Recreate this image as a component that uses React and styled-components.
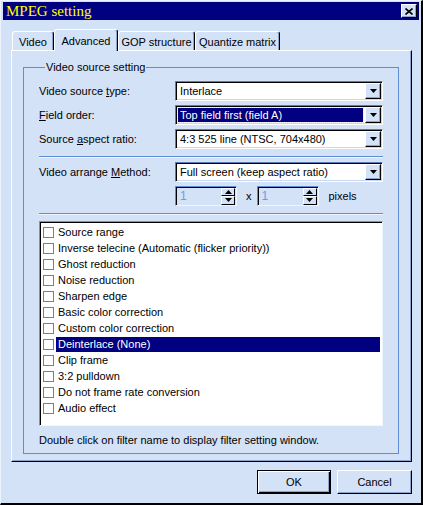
import React from 'react';
import styled, { createGlobalStyle } from 'styled-components';

const GlobalStyle = createGlobalStyle`
  html, body { margin: 0; padding: 0; background: #D4E2F7; }
  body {
    font-family: "Liberation Sans", Arial, sans-serif;
    font-size: 11px;
    color: #000;
  }
  * { box-sizing: border-box; }
`;

const Window = styled.div`
  width: 423px;
  height: 505px;
  background: #D4E2F7;
  border-top: 1px solid #EEF4FD;
  border-left: 1px solid #EEF4FD;
  border-right: 2px solid #000;
  border-bottom: 2px solid #000;
  padding: 1px 2px 0 2px;
  display: flex;
  flex-direction: column;
`;

const TitleBar = styled.div`
  height: 18px;
  background: #000080;
  display: flex;
  align-items: center;
  justify-content: space-between;
  padding: 0 2px 0 3px;
`;

const TitleText = styled.span`
  font-family: "Liberation Serif", "Times New Roman", serif;
  font-size: 15px;
  color: #FFFF00;
  line-height: 18px;
`;

const CloseButton = styled.div`
  width: 16px;
  height: 14px;
  background: #D4E2F7;
  border: 1px solid;
  border-color: #fff #000 #000 #fff;
  box-shadow: inset -1px -1px #8CA5CC;
  display: flex;
  align-items: center;
  justify-content: center;
`;

const TabRow = styled.div`
  display: flex;
  align-items: flex-end;
  height: 21px;
  margin-top: 9px;
  padding-left: 9px;
  position: relative;
  z-index: 1;
`;

const Tab = styled.div`
  width: ${p => p.$w}px;
  height: ${p => (p.$active ? 22 : 19)}px;
  margin-bottom: ${p => (p.$active ? -1 : 0)}px;
  background: #D4E2F7;
  border: 1px solid;
  border-bottom: none;
  border-color: #fff #000 transparent #fff;
  border-radius: 3px 3px 0 0;
  box-shadow: inset -1px 0 #8CA5CC;
  display: flex;
  align-items: center;
  justify-content: center;
  padding-top: ${p => (p.$active ? 0 : 2)}px;
  font-size: 11px;
  white-space: nowrap;
`;

const Panel = styled.div`
  height: 412px;
  margin: 0 7px 0 8px;
  border: 1px solid;
  border-color: #fff #000 #000 #fff;
  box-shadow: inset -1px -1px #8CA5CC;
  padding: 9px 0 0 11px;
`;

const Group = styled.fieldset`
  width: 376px;
  height: 394px;
  margin: 0;
  padding: 7px 15px 0 15px;
  border: 1px solid #5E8ED8;
  min-width: 0;
`;

const Legend = styled.legend`
  margin-left: 6px;
  padding: 0 1px;
  line-height: 14px;
  font-size: 11px;
`;

const Row = styled.div`
  display: grid;
  grid-template-columns: 136px 1fr;
  align-items: center;
  height: 20px;
  margin-top: ${p => p.$gap || 0}px;
`;

const Label = styled.span`
  white-space: nowrap;
`;

const Combo = styled.div`
  height: 20px;
  background: #fff;
  border: 1px solid;
  border-color: #5A7EB5 #fff #fff #5A7EB5;
  box-shadow: inset 1px 1px #000, inset -1px -1px #C8D8F0;
  padding: 1px;
  display: flex;
`;

const ComboText = styled.div`
  flex: 1;
  margin: 1px 2px 1px 1px;
  padding-left: 2px;
  display: flex;
  align-items: center;
  white-space: nowrap;
  background: ${p => (p.$selected ? '#000080' : 'transparent')};
  color: ${p => (p.$selected ? '#fff' : '#000')};
  outline: ${p => (p.$selected ? '1px dotted #FFFF00' : 'none')};
`;

const DropButton = styled.div`
  width: 16px;
  height: 16px;
  background: #D4E2F7;
  border: 1px solid;
  border-color: #fff #000 #000 #fff;
  box-shadow: inset -1px -1px #8CA5CC;
  display: flex;
  align-items: center;
  justify-content: center;
`;

const Separator = styled.div`
  height: 2px;
  border-top: 1px solid #5E8ED8;
  border-bottom: 1px solid #F0F6FF;
  margin-top: 7px;
`;

const SpinRow = styled.div`
  display: flex;
  align-items: center;
  height: 20px;
  margin-top: 4px;
  padding-left: 136px;
`;

const SpinBox = styled.div`
  width: 62px;
  height: 20px;
  background: #D4E2F7;
  border: 1px solid;
  border-color: #5E8ED8 #F0F6FF #F0F6FF #5E8ED8;
  box-shadow: inset 1px 1px #000;
  padding: 1px 1px 1px 4px;
  display: flex;
  align-items: center;
  color: #6E9AE0;
  font-size: 12px;
`;

const SpinValue = styled.span`
  flex: 1;
`;

const SpinButtons = styled.div`
  width: 14px;
  height: 17px;
  display: flex;
  flex-direction: column;
`;

const SpinHalf = styled.div`
  flex: 1;
  background: #D4E2F7;
  border: 1px solid;
  border-color: #fff #000 #000 #fff;
  display: flex;
  align-items: center;
  justify-content: center;
`;

const Times = styled.span`
  margin: 0 5px 0 9px;
`;

const Pixels = styled.span`
  margin-left: 10px;
`;

const ListBox = styled.div`
  height: 205px;
  margin-top: 6px;
  background: #fff;
  border: 1px solid;
  border-color: #6A96D8 #F0F6FF #F0F6FF #6A96D8;
  box-shadow: inset 1px 1px #000;
  padding: 2px 2px 0 3px;
`;

const Item = styled.div`
  display: flex;
  align-items: center;
  height: 16px;
`;

const CheckBox = styled.span`
  width: 11px;
  height: 11px;
  border: 1px solid #4F86D8;
  background: #fff;
  flex: none;
`;

const ItemLabel = styled.span`
  flex: 1;
  margin-left: 2px;
  padding-left: 2px;
  height: 15px;
  line-height: 15px;
  white-space: nowrap;
  background: ${p => (p.$selected ? '#000080' : 'transparent')};
  color: ${p => (p.$selected ? '#fff' : '#000')};
`;

const Hint = styled.div`
  margin-top: 7px;
  line-height: 14px;
`;

const Footer = styled.div`
  display: flex;
  justify-content: flex-end;
  gap: 6px;
  margin-top: 8px;
  padding-right: 7px;
`;

const Button = styled.div`
  width: ${p => p.$w}px;
  height: 24px;
  background: #D4E2F7;
  border: 1px solid;
  border-color: ${p => (p.$default ? '#000' : '#fff #000 #000 #fff')};
  box-shadow: ${p =>
    p.$default
      ? 'inset 1px 1px #fff, inset -1px -1px #000, inset -2px -2px #8CA5CC'
      : 'inset -1px -1px #8CA5CC'};
  display: flex;
  align-items: center;
  justify-content: center;
`;

function Arrow() {
  return (
    <svg width="7" height="4" viewBox="0 0 7 4">
      <path d="M0 0H7L3.5 4Z" fill="#000" />
    </svg>
  );
}

function SmallArrow({ up }) {
  return (
    <svg width="7" height="4" viewBox="0 0 7 4">
      <path d={up ? 'M3.5 0L7 4H0Z' : 'M0 0H7L3.5 4Z'} fill="#000" />
    </svg>
  );
}

function Spin() {
  return (
    <SpinBox>
      <SpinValue>1</SpinValue>
      <SpinButtons>
        <SpinHalf><SmallArrow up /></SpinHalf>
        <SpinHalf><SmallArrow /></SpinHalf>
      </SpinButtons>
    </SpinBox>
  );
}

function Select({ value, selected }) {
  return (
    <Combo>
      <ComboText $selected={selected}>{value}</ComboText>
      <DropButton><Arrow /></DropButton>
    </Combo>
  );
}

const filters = [
  'Source range',
  'Inverse telecine (Automatic (flicker priority))',
  'Ghost reduction',
  'Noise reduction',
  'Sharpen edge',
  'Basic color correction',
  'Custom color correction',
  'Deinterlace (None)',
  'Clip frame',
  '3:2 pulldown',
  'Do not frame rate conversion',
  'Audio effect',
];

const tabs = [
  { name: 'Video', w: 42 },
  { name: 'Advanced', w: 64, active: true },
  { name: 'GOP structure', w: 77 },
  { name: 'Quantize matrix', w: 85 },
];

export default function App() {
  return (
    <>
      <GlobalStyle />
      <Window>
        <TitleBar>
          <TitleText>MPEG setting</TitleText>
          <CloseButton>
            <svg width="8" height="7" viewBox="0 0 8 7">
              <path d="M0.5 0.5L7.5 6.5M7.5 0.5L0.5 6.5" stroke="#000" strokeWidth="1.6" />
            </svg>
          </CloseButton>
        </TitleBar>

        <TabRow>
          {tabs.map(t => (
            <Tab key={t.name} $w={t.w} $active={t.active}>{t.name}</Tab>
          ))}
        </TabRow>

        <Panel>
          <Group>
            <Legend>Video source setting</Legend>
            <Row>
              <Label>Video source <u>t</u>ype:</Label>
              <Select value="Interlace" />
            </Row>
            <Row $gap={4}>
              <Label><u>F</u>ield order:</Label>
              <Select value="Top field first (field A)" selected />
            </Row>
            <Row $gap={4}>
              <Label>Source <u>a</u>spect ratio:</Label>
              <Select value="4:3 525 line (NTSC, 704x480)" />
            </Row>
            <Separator />
            <Row $gap={4}>
              <Label>Video arrange <u>M</u>ethod:</Label>
              <Select value="Full screen (keep aspect ratio)" />
            </Row>
            <SpinRow>
              <Spin />
              <Times>x</Times>
              <Spin />
              <Pixels>pixels</Pixels>
            </SpinRow>
            <Separator />
            <ListBox>
              {filters.map(f => (
                <Item key={f}>
                  <CheckBox />
                  <ItemLabel $selected={f === 'Deinterlace (None)'}>{f}</ItemLabel>
                </Item>
              ))}
            </ListBox>
            <Hint>Double click on filter name to display filter setting window.</Hint>
          </Group>
        </Panel>

        <Footer>
          <Button $w={74} $default>OK</Button>
          <Button $w={75}>Cancel</Button>
        </Footer>
      </Window>
    </>
  );
}
